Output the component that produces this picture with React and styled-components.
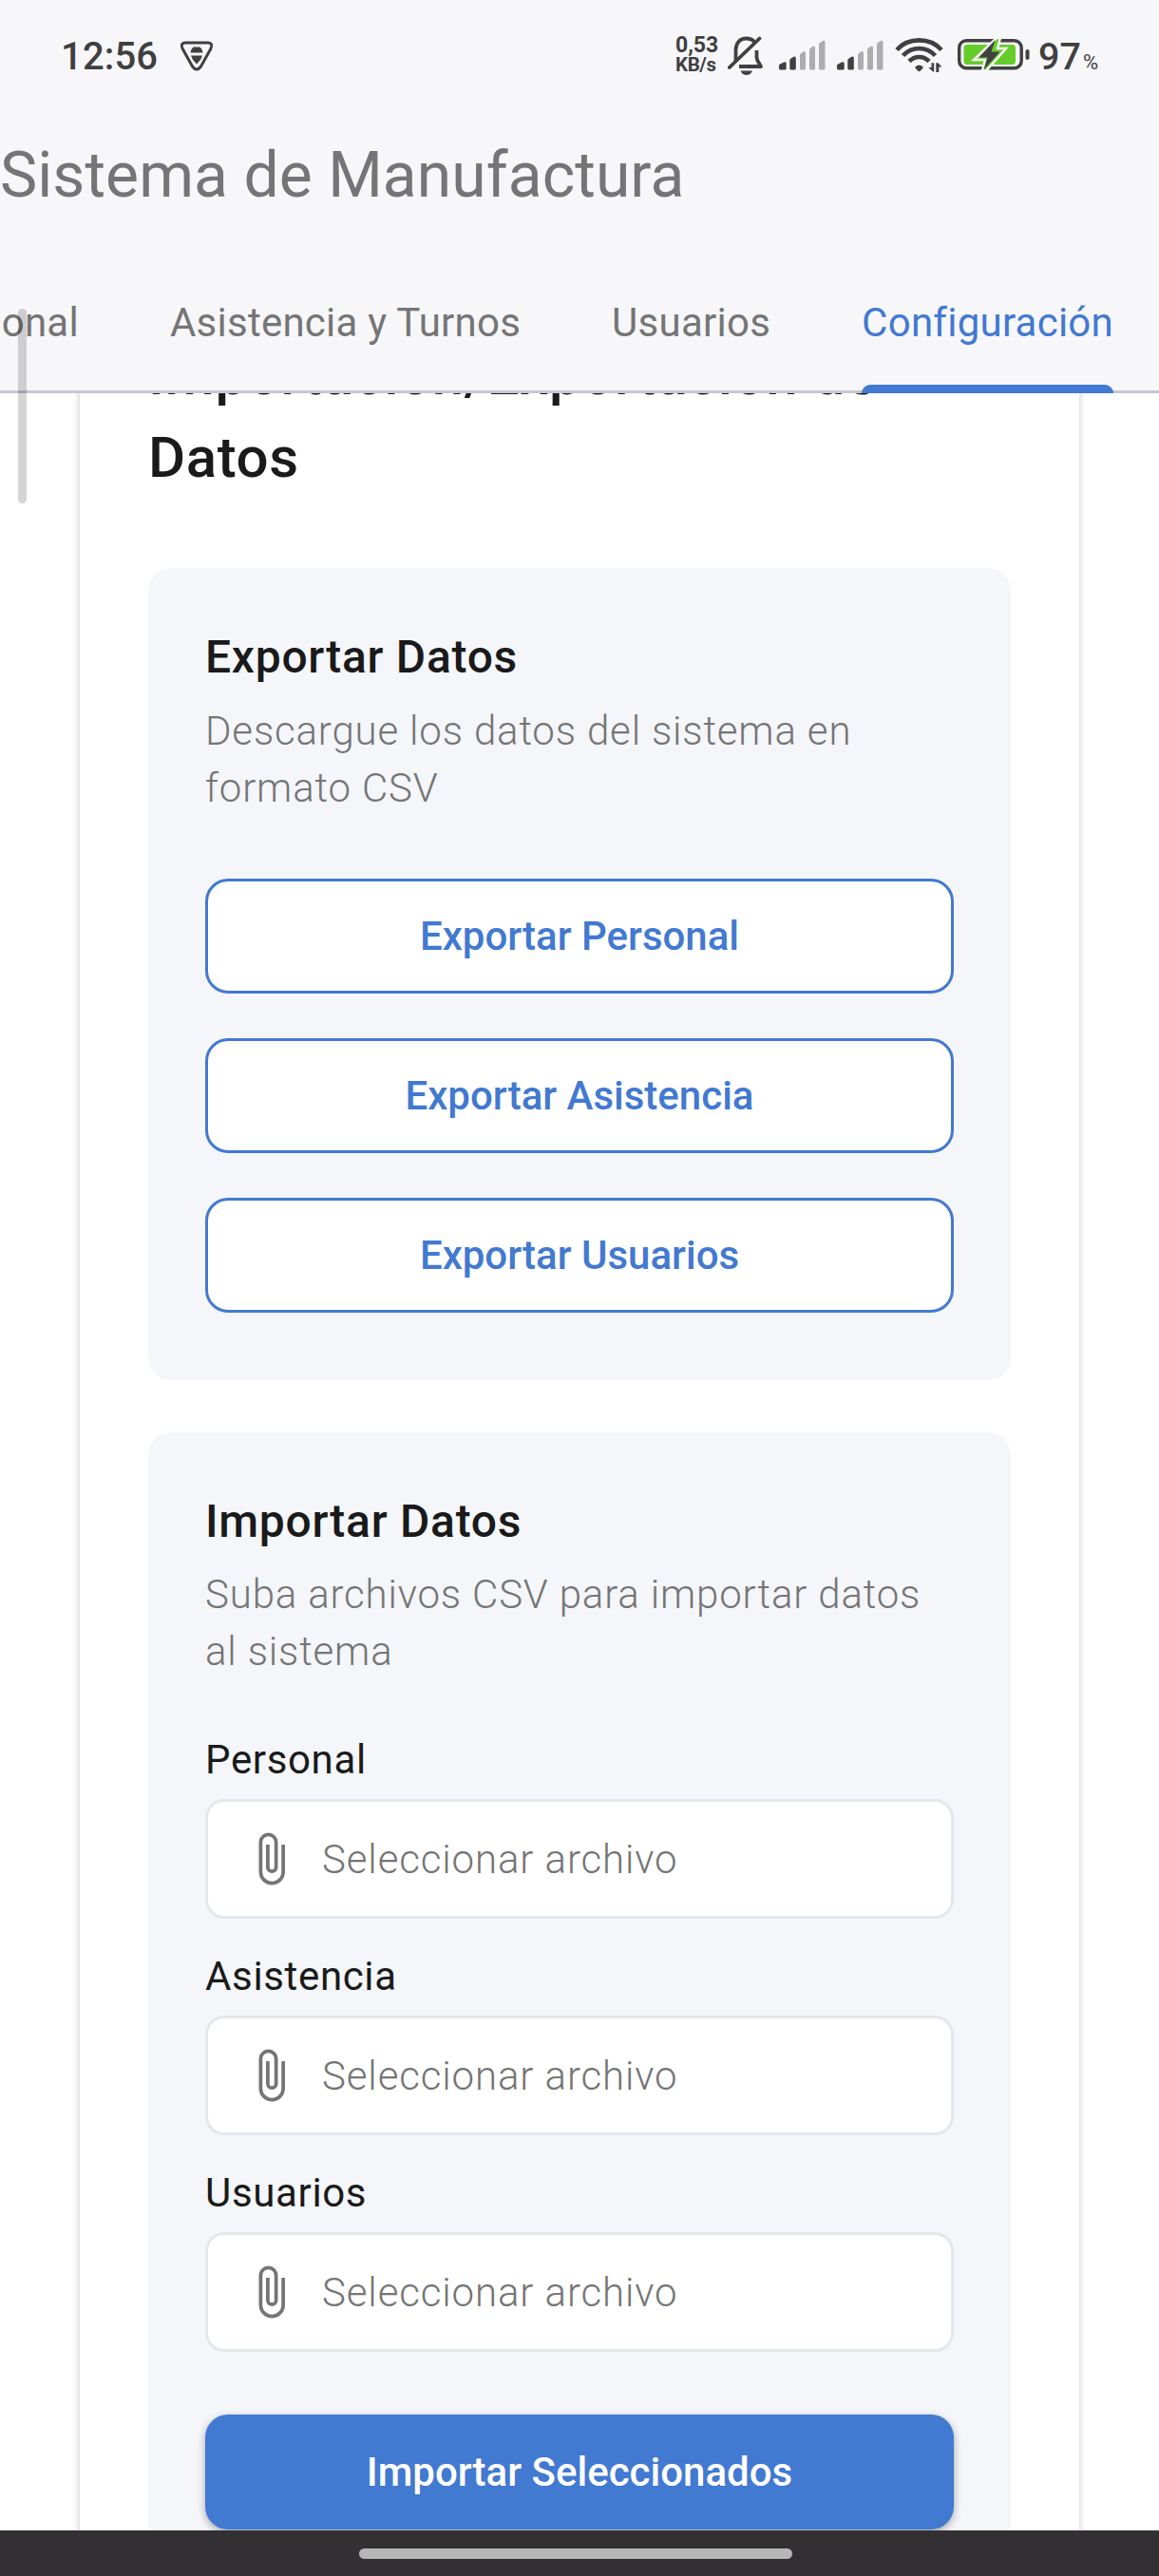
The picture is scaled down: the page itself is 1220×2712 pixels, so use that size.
import React from "react";
import styled, { createGlobalStyle } from "styled-components";

const color = {
  bar: "#f7f7fa",
  section: "#f4f6fa",
  ink: "#1a1a1a",
  muted: "#757575",
  blue: "#4279d1",
  status: "#404040",
};

const GlobalStyle = createGlobalStyle`
  * { box-sizing: border-box; }
  body { margin: 0; background: #fff; font-family: Roboto, "Noto Sans", sans-serif; }
  button { font: inherit; }
`;

const Screen = styled.div`
  position: relative;
  display: flex;
  flex-direction: column;
  width: 1220px;
  height: 2712px;
  overflow: hidden;
  background: #fff;
`;

const Header = styled.header`
  flex: none;
  height: 414px;
  display: flex;
  flex-direction: column;
  background: ${color.bar};
  border-bottom: 3px solid #cac4d0;
`;

const StatusBar = styled.div`
  display: flex;
  align-items: flex-start;
  height: 120px;
  padding-left: 64px;
  color: ${color.status};
`;

const StatusGroup = styled.div`
  display: flex;
  align-items: flex-start;
  width: ${(p) => p.$width};
  svg { flex: none; display: block; }
`;

const Clock = styled.span`
  width: 125px;
  margin-top: 36px;
  font-size: 40px;
  line-height: 48px;
  font-weight: 500;
  letter-spacing: 0.15px;
`;

const NetSpeed = styled.span`
  display: flex;
  flex-direction: column;
  width: 55px;
  margin-top: 38px;
  font-size: 23px;
  line-height: 20px;
  font-weight: 700;
  white-space: nowrap;
  small { font-size: 20.5px; line-height: 20px; letter-spacing: -0.4px; }
`;

const Percent = styled.span`
  display: flex;
  align-items: baseline;
  margin: 36px 0 0 9px;
  font-size: 39.5px;
  line-height: 48px;
  font-weight: 500;
  small { font-size: 22px; font-weight: 400; margin-left: 2px; }
`;

const AppTitle = styled.h1`
  margin: 22px 0 0;
  font-size: 66px;
  line-height: 85px;
  font-weight: 400;
  letter-spacing: 0.05px;
  color: ${color.muted};
`;

const Tabs = styled.nav`
  display: flex;
  justify-content: flex-end;
  gap: 96px;
  height: 144px;
  margin-top: auto;
  margin-bottom: -3px;
  padding-right: 48px;
`;

const Tab = styled.div`
  position: relative;
  flex: none;
  display: flex;
  align-items: center;
  padding-bottom: 4px;
  font-size: 42px;
  line-height: 60px;
  letter-spacing: 0.25px;
  white-space: nowrap;
  color: ${(p) => (p.$active ? color.blue : color.muted)};
  &::after {
    content: "";
    display: ${(p) => (p.$active ? "block" : "none")};
    position: absolute;
    left: 0;
    right: 0;
    bottom: 0;
    height: 9px;
    border-radius: 9px 9px 0 0;
    background: ${color.blue};
  }
`;

const ScrollThumb = styled.div`
  position: absolute;
  left: 19px;
  top: 325px;
  width: 9px;
  height: 205px;
  border-radius: 5px;
  background: rgba(0, 0, 0, 0.165);
`;

const Content = styled.main`
  flex: 1;
  min-height: 0;
  overflow: hidden;
  padding: 0 84px;
`;

const Card = styled.div`
  height: 2600px;
  margin-top: -135px;
  padding: 72px 72px 0;
  background: #fff;
  box-shadow: 0 3px 7px rgba(0, 0, 0, 0.24);
`;

const Heading = styled.h2`
  margin: 0 0 73px;
  font-size: 60px;
  line-height: 87px;
  font-weight: 500;
  letter-spacing: 0.6px;
  color: ${color.ink};
`;

const Section = styled.section`
  margin-bottom: 55px;
  padding: 58px 60px 71px;
  border-radius: 24px;
  background: ${color.section};
`;

const SectionTitle = styled.h3`
  margin: 0 0 ${(p) => p.$gap};
  font-size: 48px;
  line-height: 72px;
  font-weight: 500;
  letter-spacing: 0.72px;
  color: ${color.ink};
`;

const Description = styled.p`
  margin: 0 0 ${(p) => p.$gap};
  font-size: 42px;
  line-height: 60px;
  font-weight: 300;
  letter-spacing: 0.83px;
  color: ${color.muted};
`;

const ButtonStack = styled.div`
  display: grid;
  gap: 47px;
`;

const Button = styled.button`
  display: block;
  width: 100%;
  height: 121px;
  padding: 0;
  border: ${(p) => (p.$filled ? "none" : `3px solid ${color.blue}`)};
  border-radius: 24px;
  background: ${(p) => (p.$filled ? color.blue : "#fff")};
  box-shadow: ${(p) => (p.$filled ? "0 3px 9px rgba(0, 0, 0, 0.33)" : "none")};
  color: ${(p) => (p.$filled ? "#fff" : color.blue)};
  font-size: 42px;
  font-weight: 500;
  letter-spacing: 0;
`;

const Label = styled.label`
  display: block;
  margin-bottom: 11px;
  font-size: 42px;
  line-height: 60px;
  letter-spacing: 0.65px;
  color: ${color.ink};
`;

const FilePicker = styled.div`
  display: flex;
  align-items: center;
  gap: 24px;
  height: 126px;
  margin-bottom: ${(p) => (p.$last ? "66px" : "31px")};
  padding-left: 36px;
  border: 3px solid #e4e7ec;
  border-radius: 20px;
  background: #fff;
  font-size: 42px;
  font-weight: 300;
  letter-spacing: 0.87px;
  color: ${color.muted};
`;

const NavBar = styled.footer`
  flex: none;
  display: flex;
  justify-content: center;
  height: 48px;
  padding: 19px 8px 0 0;
  background: #333034;
`;

const HomeHandle = styled.div`
  width: 456px;
  height: 11px;
  border-radius: 6px;
  background: #b6b6b6;
`;

const ShieldIcon = () => (
  <svg width="36" height="34" viewBox="0 0 36 34" style={{ marginTop: 42 }}>
    <path d="M6 3H30Q35.500 3.500 33 9L22.500 28Q18 34 13.500 28L3 9Q.500 3.500 6 3Z" fill="none" stroke={color.status} strokeWidth="3" />
    <path d="M11.500 13.500Q12 9 15 7.800L13.500 6.200L15.500 7.500H20.500L22.500 6.200L21 7.800Q24 9 24.500 13.500ZM12 16.500H24L22 21L18 25.500L14 21Z" fill={color.status} />
  </svg>
);

const BellOffIcon = () => (
  <svg width="38" height="42" viewBox="0 0 38 42" style={{ margin: "38px 0 0 0" }}>
    <g fill="none" stroke={color.status} strokeWidth="3.800">
      <path d="M8.500 27V14C9 7 13 2.500 19.500 2.500C23 2.500 26 3.700 28 6" />
      <path d="M30.500 15V22.500C31 27 33 28 35 32H12" strokeLinejoin="round" />
      <path d="M1.800 33L33.500 2.500" strokeLinecap="round" />
    </g>
    <path d="M13.500 36.500H26Q24 41 19.700 41Q15.500 41 13.500 36.500Z" fill={color.status} />
  </svg>
);

const SignalIcon = ({ left }) => (
  <svg width="49" height="32" viewBox="0 0 49 32" style={{ margin: `42px 0 0 ${left}px` }}>
    {[[0, 23, 7.700], [11.300, 17.300, 6.500], [22, 11.800, 6], [32, 6.300, 6], [42, 0.500, 6.500]].map(([x, y, w], i) => (
      <path
        key={x}
        d={`M${x} ${y + 4}Q${x} ${y + 3} ${x + 1} ${y + 2.500}L${x + w - 2} ${y + 0.300}Q${x + w} ${y} ${x + w} ${y + 2}V30Q${x + w} 31.500 ${x + w - 1.500} 31.500H${x + 1.500}Q${x} 31.500 ${x} 30Z`}
        fill={i < 2 ? color.status : "#adadaf"}
      />
    ))}
  </svg>
);

const WifiIcon = () => (
  <svg width="51" height="40" viewBox="0 0 51 40" style={{ margin: "38px 0 0 12px" }}>
    <g fill="none" stroke={color.status} strokeWidth="4.600">
      <path d="M2 14.500C14 1 37 1 49 14.500" />
      <path d="M8.500 20.500C18 10.500 33 10.500 42.500 20.500" />
      <path d="M15 26.500C21 20.500 30 20.500 36 26.500" />
    </g>
    <path d="M21.300 32.500Q25.500 28.500 29.700 32.500Q30 34 25.500 37.500Q21 34 21.300 32.500Z" fill={color.status} />
    <path d="M35.300 33H38.500V28.300H41.200V37.500H40ZM43.300 38V28.300H45.500L49.500 32.500H46.300V38Z" fill={color.status} />
  </svg>
);

const BatteryIcon = () => (
  <svg width="76" height="36" viewBox="0 0 76 36" style={{ margin: "39px 0 0 15px" }}>
    <rect x="1.700" y="3.700" width="65.500" height="29" rx="7.500" fill="none" stroke={color.status} strokeWidth="3.400" />
    <rect x="6.500" y="8" width="54.500" height="21" rx="3.500" fill="#66cc29" />
    <rect x="71.500" y="13" width="4" height="11" rx="2" fill={color.status} />
    <path d="M41 1L17 24H29L26 35.500H30L51 12H42L45 1Z" fill="#66cc29" stroke={color.bar} strokeWidth="2.500" />
    <path d="M39.500 3L22.500 21.500H31.500L27.500 34.500L44.500 15.500H35.500Z" fill={color.status} />
  </svg>
);

const PaperclipIcon = () => (
  <svg width="60" height="60" viewBox="0 0 24 24" fill={color.muted}>
    <path d="M16.500 6V17.500A4 4 0 0 1 12.500 21.500A4 4 0 0 1 8.500 17.500V5A2.500 2.500 0 0 1 11 2.500A2.500 2.500 0 0 1 13.500 5V15.500A1 1 0 0 1 12.500 16.500A1 1 0 0 1 11.500 15.500V6H10V15.500A2.500 2.500 0 0 0 12.500 18A2.500 2.500 0 0 0 15 15.500V5A4 4 0 0 0 11 1A4 4 0 0 0 7 5V17.500A5.500 5.500 0 0 0 12.500 23A5.500 5.500 0 0 0 18 17.500V6H16.500Z" />
  </svg>
);

const tabs = ["Personal", "Asistencia y Turnos", "Usuarios", "Configuración"];
const groups = ["Personal", "Asistencia", "Usuarios"];

export default function App() {
  return (
    <Screen>
      <GlobalStyle />
      <Header>
        <StatusBar>
          <StatusGroup $width="647px">
            <Clock>12:56</Clock>
            <ShieldIcon />
          </StatusGroup>
          <StatusGroup>
            <NetSpeed>0,53<small>KB/s</small></NetSpeed>
            <BellOffIcon />
            <SignalIcon left={16} />
            <SignalIcon left={12} />
            <WifiIcon />
            <BatteryIcon />
            <Percent>97<small>%</small></Percent>
          </StatusGroup>
        </StatusBar>
        <AppTitle>Sistema de Manufactura</AppTitle>
        <Tabs>
          {tabs.map((name) => (
            <Tab key={name} $active={name === "Configuración"}>{name}</Tab>
          ))}
        </Tabs>
      </Header>
      <Content>
        <Card>
          <Heading>Importación/Exportación de Datos</Heading>
          <Section>
            <SectionTitle $gap="12px">Exportar Datos</SectionTitle>
            <Description $gap="65px">Descargue los datos del sistema en formato CSV</Description>
            <ButtonStack>
              {groups.map((name) => (
                <Button key={name}>Exportar {name}</Button>
              ))}
            </ButtonStack>
          </Section>
          <Section>
            <SectionTitle $gap="11px">Importar Datos</SectionTitle>
            <Description $gap="54px">Suba archivos CSV para importar datos al sistema</Description>
            {groups.map((name, i) => (
              <React.Fragment key={name}>
                <Label>{name}</Label>
                <FilePicker $last={i === groups.length - 1}>
                  <PaperclipIcon />
                  Seleccionar archivo
                </FilePicker>
              </React.Fragment>
            ))}
            <Button $filled>Importar Seleccionados</Button>
          </Section>
        </Card>
      </Content>
      <NavBar>
        <HomeHandle />
      </NavBar>
      <ScrollThumb />
    </Screen>
  );
}
